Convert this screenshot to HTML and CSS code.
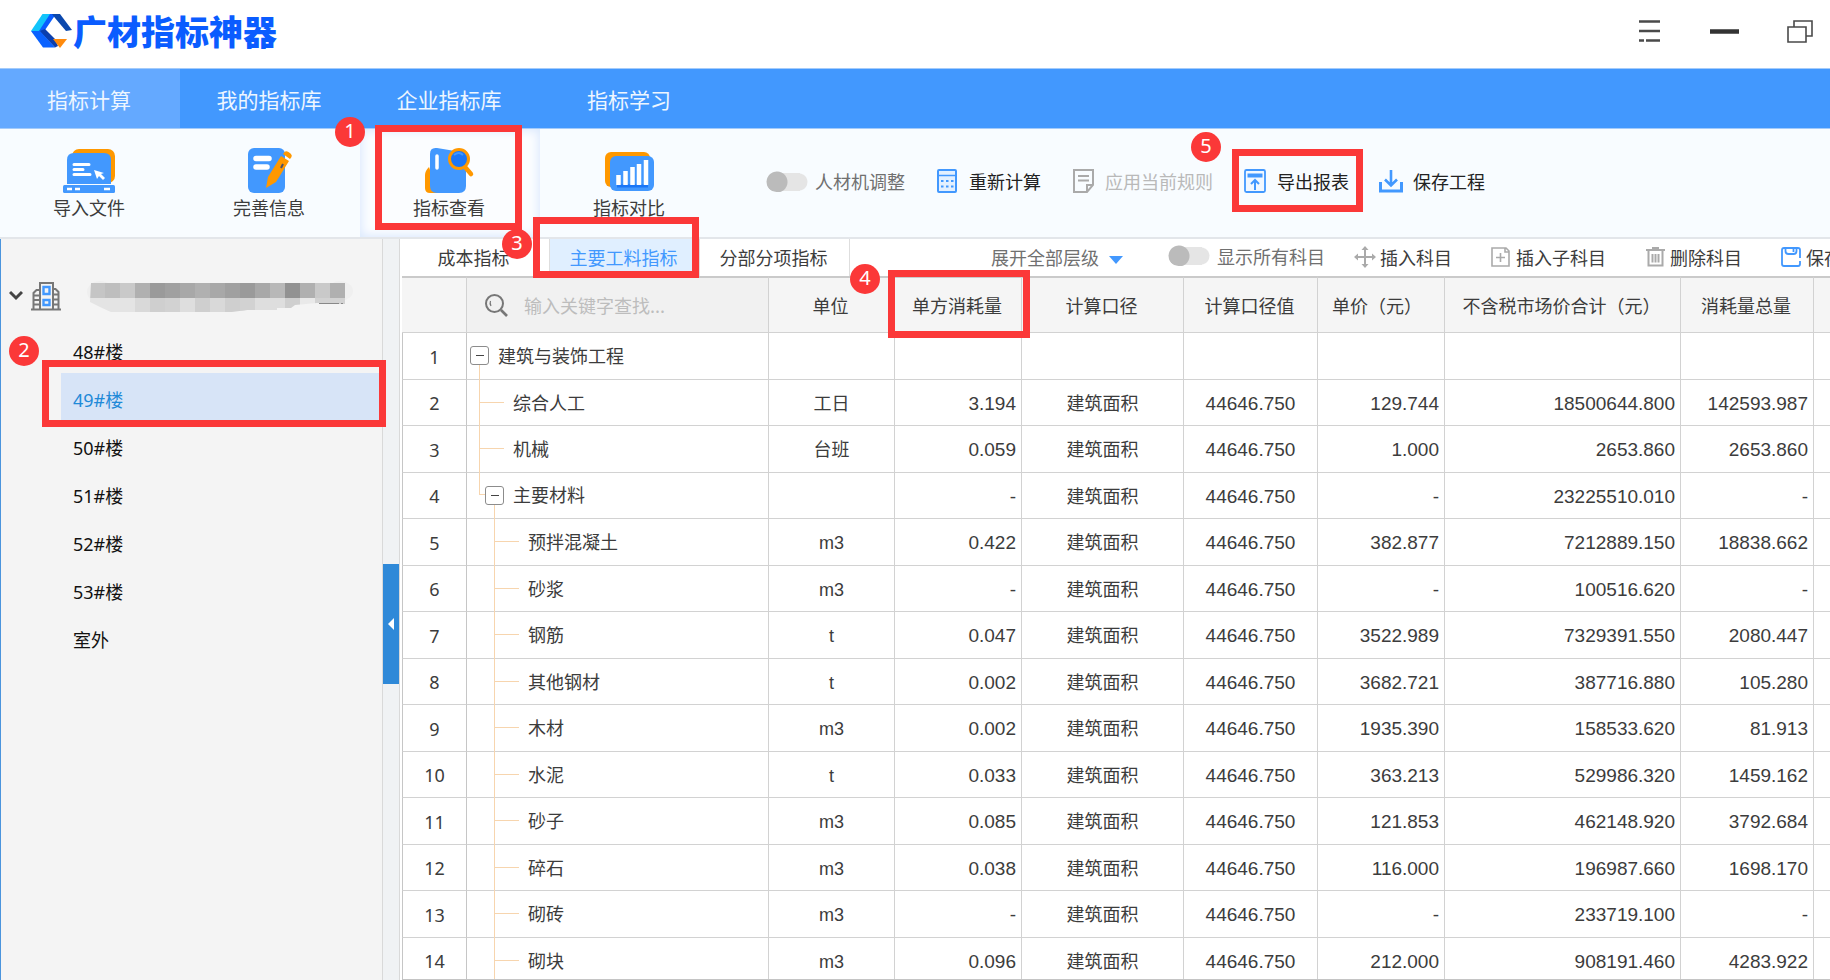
FILE: index.html
```html
<!DOCTYPE html>
<html lang="zh-CN">
<head>
<meta charset="utf-8">
<title>广材指标神器</title>
<link rel="stylesheet" href="styles.css">
</head>
<body>
<header class="titlebar">
  <h1 class="brand">
    <svg class="brand-mark" viewBox="0 0 42 36" aria-hidden="true">
      <path d="M0 18L11.500 1H22L11 18z" fill="#12c4fb"/>
      <path d="M19 1h6L14 17l-6 1z" fill="#0a5cff"/>
      <path d="M8 18l6-2 10 10 3 7-3 1.500z" fill="#0b3fae"/>
      <path d="M0 18h9l15 16.500H12z" fill="#0a62ff"/>
      <path d="M21 1h8l12 16-6 1L24 5z" fill="#0b48ad"/>
      <path d="M22 26h14l-7 9z" fill="#ff8a0c"/>
    </svg>
    <span class="brand-name">广材指标神器</span>
  </h1>
  <div class="window-controls">
    <button class="icon-button" aria-label="菜单"><svg width="30" height="30" viewBox="0 0 30 30"><path d="M4 5.500h21M4 15h21M4 24.500h5M11 24.500h14" stroke="#4a4a4a" stroke-width="2.400"/></svg></button>
    <button class="icon-button" aria-label="最小化"><svg width="30" height="30" viewBox="0 0 30 30"><path d="M0 15.500h29" stroke="#333" stroke-width="4.500"/></svg></button>
    <button class="icon-button" aria-label="还原"><svg width="30" height="30" viewBox="0 0 30 30" fill="none" stroke="#4a4a4a" stroke-width="1.600"><path d="M3 11h18v15H3zM9 11V5h18v15h-6"/></svg></button>
  </div>
</header>

<nav class="main-nav">
  <a class="nav-item active" href="#calc">指标计算</a>
  <a class="nav-item" href="#mine">我的指标库</a>
  <a class="nav-item" href="#company">企业指标库</a>
  <a class="nav-item" href="#learn">指标学习</a>
</nav>

<section class="ribbon">
  <button class="ribbon-item">
    <svg width="52" height="48" viewBox="0 0 52 48"><rect x="9" y="2" width="43" height="34" rx="7" fill="#ff9800"/><path d="M4 37V13q0-7 7-7h30q7 0 7 7v24z" fill="#4298fe"/><rect x="0" y="38" width="52" height="8" rx="1.500" fill="#4298fe"/><path d="M11 17.500h15M11 22.500h9M11 27.500h16" stroke="#fff" stroke-width="3" stroke-linecap="round"/><path d="M31 23l10 3-3 1 4 4-2 2-4-4-2 3z" fill="#fff"/><path d="M4 42h5M12 42h5M41 42h6" stroke="#fff" stroke-width="2.500"/></svg>
    <span>导入文件</span>
  </button>
  <button class="ribbon-item">
    <svg width="52" height="48" viewBox="0 0 52 48"><rect x="5" y="1" width="37" height="45" rx="6" fill="#4298fe"/><path d="M13 11.500h13M13 20h11" stroke="#fff" stroke-width="5.500" stroke-linecap="round"/><path d="M23 41l2-11 13-21 8 5-13 21zM40 7l1.500-2q1.500-1.500 4 0l2 1.500q2 1.500 1 3.500l-1.500 2z" fill="#ff9800"/><path d="M40 17l-2 4" stroke="#4a506a" stroke-width="2"/></svg>
    <span>完善信息</span>
  </button>
  <button class="ribbon-item active">
    <svg width="52" height="48" viewBox="0 0 52 48"><path d="M6 20q-4 4-4 8v13q0 5 5 5h8z" fill="#ff9800"/><path d="M7 7q0-7 7-6l24 4q5 1 5 6v28q0 7-7 7H14q-7 0-7-7z" fill="#4298fe"/><path d="M14 9v12" stroke="#fff" stroke-width="3.500" stroke-linecap="round"/><path d="M42 20l6 7" stroke="#ff9800" stroke-width="4.500" stroke-linecap="round"/><circle cx="36" cy="12" r="9.500" fill="#1b76f6" stroke="#ff9800" stroke-width="3"/><path d="M31 8q5-4 9 0" fill="none" stroke="#4298fe" stroke-width="2"/></svg>
    <span>指标查看</span>
  </button>
  <button class="ribbon-item">
    <svg width="52" height="48" viewBox="0 0 52 48"><rect x="2" y="5" width="45" height="35" rx="6" fill="#ff9800"/><rect x="7" y="9" width="44" height="35" rx="6" fill="#4298fe"/><path d="M14 39h31" stroke="#1b76f6" stroke-width="3"/><path d="M15.500 38V28M22.500 38V24M29.500 38V20M36 38V17M43 38V13" stroke="#fff" stroke-width="4.500"/></svg>
    <span>指标对比</span>
  </button>
  <div class="ribbon-tools">
    <label class="switch-label"><input class="switch" type="checkbox">人材机调整</label>
    <button class="tool strong"><svg width="24" height="26" viewBox="0 0 24 26"><rect x="3" y="2" width="18" height="22" rx="1" fill="#e3f0ff" stroke="#4298fe" stroke-width="2"/><path d="M4 7.500h16" stroke="#4298fe" stroke-width="1.500"/><path d="M6 13h2.500M11 13h2.500M16 13h2.500M6 18.500h2.500M11 18.500h2.500M16 18.500h2.500" stroke="#4298fe" stroke-width="2.200"/></svg>重新计算</button>
    <button class="tool" disabled><svg width="24" height="26" viewBox="0 0 24 26" fill="none" stroke="#aaa" stroke-width="2"><path d="M3 2h19v15l-6 7H3zM22 17h-6v7M7 8h11M7 12.500h11"/></svg>应用当前规则</button>
    <button class="tool strong"><svg width="24" height="26" viewBox="0 0 24 26" fill="none" stroke="#4298fe"><rect x="2" y="2" width="20" height="22" rx="1.500" fill="#f2f8ff" stroke-width="1.800"/><path d="M4.500 7.500h15" stroke-width="4"/><path d="M12 22v-9M8 16l4-4 4 4" stroke-width="2"/></svg>导出报表</button>
    <button class="tool strong"><svg width="24" height="26" viewBox="0 0 24 26" fill="none" stroke="#4298fe"><path d="M1.500 14v9h21v-9" stroke-width="3"/><path d="M12 2v15M6 11.500l6 6 6-6" stroke-width="2.600"/></svg>保存工程</button>
  </div>
</section>

<main class="workspace">
  <aside class="sidebar">
    <div class="project">
      <svg width="14" height="12" viewBox="0 0 14 12" aria-hidden="true"><path d="M1 2l6 6 6-6" fill="none" stroke="#444" stroke-width="3"/></svg>
      <svg width="30" height="30" viewBox="0 0 30 30" fill="none" stroke="#777" stroke-width="2" aria-hidden="true"><path d="M0 28.500h30M2.500 28V12l3-3H8M27.500 28V11l-3-3H22M9 28V2h13v26M3 14.500h5M3 19h5M3 23.500h5M23 13.500h4M23 18.500h4M23 23.500h4"/><path d="M12.500 6h6v7h-6zM12.500 19h6v5h-6z" stroke="#4298fe" stroke-width="2.400"/></svg>
      <svg class="redacted" width="268" height="32" viewBox="0 0 268 32" role="img" aria-label="项目名称已隐藏">
        <clipPath id="smudge"><path d="M5 3h254v21h-10v-1h-18l-22 2-4 3h-14v2h-30l-15 2-20 1H27L14 27 4 22z"/></clipPath>
        <ellipse cx="254" cy="11" rx="13" ry="10" fill="#efefef"/><ellipse cx="14" cy="12" rx="13" ry="11" fill="#efefef"/>
        <g clip-path="url(#smudge)">
          <path d="M4 18h45v14H4z" fill="#e4e4e4"/><path d="M49 18h15v14H49zM124 18h15v14h-15zM154 18h15v14h-15z" fill="#d9d9d9"/><path d="M64 18h15v14H64zM109 18h15v14h-15zM139 18h15v14h-15z" fill="#cfcfcf"/><path d="M79 18h15v14H79zM154 18h15v14h-15zM229 18h30v6h-30z" fill="#d2d2d2"/><path d="M94 18h15v14H94zM169 18h30v14h-30z" fill="#dedede"/><path d="M199 18h15v10h-15z" fill="#cfcfcf"/><path d="M214 18h15v8h-15z" fill="#e9e9e9"/>
          <path d="M4 3h15v15H4z" fill="#c5c5c5"/><path d="M19 3h15v15H19z" fill="#bebebe"/><path d="M34 3h15v15H34zM229 3h15v15h-15z" fill="#c9c9c9"/><path d="M49 3h15v15H49zM109 3h15v15h-15zM214 3h15v15h-15zM244 3h15v15h-15z" fill="#b0b0b0"/><path d="M64 3h15v15H64zM154 3h15v15h-15z" fill="#9a9a9a"/><path d="M79 3h15v15H79zM139 3h15v15h-15z" fill="#a0a0a0"/><path d="M94 3h15v15H94zM124 3h15v15h-15zM169 3h15v15h-15z" fill="#a8a8a8"/><path d="M184 3h15v15h-15z" fill="#b8b8b8"/><path d="M199 3h15v15h-15z" fill="#929292"/>
        </g>
        <path d="M233 23.500h20M255 23.500h2" stroke="#888"/>
      </svg>
    </div>
    <ul class="building-list">
      <li><a href="#b48">48#楼</a></li>
      <li><a class="selected" href="#b49">49#楼</a></li>
      <li><a href="#b50">50#楼</a></li>
      <li><a href="#b51">51#楼</a></li>
      <li><a href="#b52">52#楼</a></li>
      <li><a href="#b53">53#楼</a></li>
      <li><a href="#outdoor">室外</a></li>
    </ul>
  </aside>
  <div class="splitter"><button class="splitter-handle" aria-label="收起"><svg width="16" height="14" viewBox="0 0 16 14"><path d="M11 1v12L5 7z" fill="#fff"/></svg></button></div>
  <section class="content">
    <div class="tabbar">
      <a class="tab" href="#cost">成本指标</a>
      <a class="tab active" href="#material">主要工料指标</a>
      <a class="tab" href="#section">分部分项指标</a>
      <div class="sub-tools">
        <label class="level-picker"><select aria-label="层级"><option>展开全部层级</option></select><svg width="14" height="9" viewBox="0 0 14 9"><path d="M0 0h14L7 8z" fill="#4298fe"/></svg></label>
        <label class="switch-label"><input class="switch" type="checkbox">显示所有科目</label>
        <div class="row-actions">
          <button class="tool"><svg width="22" height="22" viewBox="0 0 22 22" fill="none" stroke="#aaa" stroke-width="2"><path d="M11 1v20M1 11h20"/><path d="M11 0l3.500 4h-7zM11 22l3.500-4h-7zM0 11l4-3.500v7zM22 11l-4-3.500v7z" fill="#aaa" stroke="none"/></svg>插入科目</button>
          <button class="tool"><svg width="22" height="22" viewBox="0 0 22 22" fill="none" stroke="#aaa" stroke-width="1.600"><path d="M2 2h14l3 3v15H2zM15 2v4h4M10.500 7v9M6 11.500h9"/></svg>插入子科目</button>
          <button class="tool"><svg width="22" height="22" viewBox="0 0 22 22" fill="none" stroke="#aaa" stroke-width="2"><path d="M2 4h19M8 2h7M4.500 5v14.500h14V5M8.500 8v8.500M11.500 8v8.500M14.500 8v8.500"/></svg>删除科目</button>
          <button class="tool"><svg width="22" height="22" viewBox="0 0 22 22" fill="none" stroke="#4298fe" stroke-width="1.800"><path d="M20 15v3q0 2-2 2H4q-2 0-2-2V4q0-2 2-2h14q2 0 2 2v8M5.500 2v3q0 3 3 3h5q3 0 3-3V2M13.500 3v3"/></svg>保存</button>
        </div>
      </div>
    </div>
    <div class="grid-wrap">
      <table class="grid">
        <colgroup><col class="c-num"><col class="c-name"><col class="c-unit"><col class="c-use"><col class="c-base"><col class="c-value"><col class="c-price"><col class="c-total"><col class="c-sum"><col></colgroup>
        <thead><tr><th></th><th class="search"><div class="search-box"><svg width="24" height="24" viewBox="0 0 24 24" fill="none" stroke="#777" stroke-width="2"><circle cx="10.500" cy="10.500" r="8.500"/><path d="M17 17l6 6" stroke-width="2.600"/><path d="M6.500 8q-1 2.500.5 5" stroke-width="1.200"/></svg><input type="text" aria-label="查找" placeholder="输入关键字查找..."></div></th><th>单位</th><th>单方消耗量</th><th>计算口径</th><th>计算口径值</th><th class="price-head">单价（元）</th><th>不含税市场价合计（元）</th><th>消耗量总量</th><th></th></tr></thead>
        <tbody>
          <tr><th>1</th><td class="name root"><button class="fold" aria-label="折叠"></button>建筑与装饰工程</td><td></td><td></td><td></td><td></td><td></td><td></td><td></td><td></td></tr>
          <tr><th>2</th><td class="name child">综合人工</td><td>工日</td><td>3.194</td><td>建筑面积</td><td>44646.750</td><td>129.744</td><td>18500644.800</td><td>142593.987</td><td></td></tr>
          <tr><th>3</th><td class="name child">机械</td><td>台班</td><td>0.059</td><td>建筑面积</td><td>44646.750</td><td>1.000</td><td>2653.860</td><td>2653.860</td><td></td></tr>
          <tr><th>4</th><td class="name branch"><button class="fold" aria-label="折叠"></button>主要材料</td><td></td><td>-</td><td>建筑面积</td><td>44646.750</td><td>-</td><td>23225510.010</td><td>-</td><td></td></tr>
          <tr><th>5</th><td class="name leaf">预拌混凝土</td><td>m3</td><td>0.422</td><td>建筑面积</td><td>44646.750</td><td>382.877</td><td>7212889.150</td><td>18838.662</td><td></td></tr>
          <tr><th>6</th><td class="name leaf">砂浆</td><td>m3</td><td>-</td><td>建筑面积</td><td>44646.750</td><td>-</td><td>100516.620</td><td>-</td><td></td></tr>
          <tr><th>7</th><td class="name leaf">钢筋</td><td>t</td><td>0.047</td><td>建筑面积</td><td>44646.750</td><td>3522.989</td><td>7329391.550</td><td>2080.447</td><td></td></tr>
          <tr><th>8</th><td class="name leaf">其他钢材</td><td>t</td><td>0.002</td><td>建筑面积</td><td>44646.750</td><td>3682.721</td><td>387716.880</td><td>105.280</td><td></td></tr>
          <tr><th>9</th><td class="name leaf">木材</td><td>m3</td><td>0.002</td><td>建筑面积</td><td>44646.750</td><td>1935.390</td><td>158533.620</td><td>81.913</td><td></td></tr>
          <tr><th>10</th><td class="name leaf">水泥</td><td>t</td><td>0.033</td><td>建筑面积</td><td>44646.750</td><td>363.213</td><td>529986.320</td><td>1459.162</td><td></td></tr>
          <tr><th>11</th><td class="name leaf">砂子</td><td>m3</td><td>0.085</td><td>建筑面积</td><td>44646.750</td><td>121.853</td><td>462148.920</td><td>3792.684</td><td></td></tr>
          <tr><th>12</th><td class="name leaf">碎石</td><td>m3</td><td>0.038</td><td>建筑面积</td><td>44646.750</td><td>116.000</td><td>196987.660</td><td>1698.170</td><td></td></tr>
          <tr><th>13</th><td class="name leaf">砌砖</td><td>m3</td><td>-</td><td>建筑面积</td><td>44646.750</td><td>-</td><td>233719.100</td><td>-</td><td></td></tr>
          <tr><th>14</th><td class="name leaf">砌块</td><td>m3</td><td>0.096</td><td>建筑面积</td><td>44646.750</td><td>212.000</td><td>908191.460</td><td>4283.922</td><td></td></tr>
        </tbody>
      </table>
    </div>
  </section>
</main>

<div class="callouts">
  <div class="frame frame-view"></div>
  <div class="frame frame-building"></div>
  <div class="frame frame-tab"></div>
  <div class="frame frame-column"></div>
  <div class="frame frame-export"></div>
  <span class="step step-1">1</span>
  <span class="step step-2">2</span>
  <span class="step step-3">3</span>
  <span class="step step-4">4</span>
  <span class="step step-5">5</span>
</div>
</body>
</html>
```

FILE: styles.css
```css
* { box-sizing: border-box; }

html, body { height: 100%; }

body {
  position: relative;
  margin: 0;
  display: flex;
  flex-direction: column;
  overflow: hidden;
  background: #fff;
  color: #3c3c3c;
  font: 18px/24px "Noto Sans CJK SC", sans-serif;
}

button, input, select {
  margin: 0;
  padding: 0;
  border: 0;
  background: none;
  color: inherit;
  font: inherit;
}

svg { display: block; flex: none; }
a { color: inherit; text-decoration: none; }

/* Title bar */
.titlebar {
  flex: none;
  display: flex;
  align-items: center;
  justify-content: space-between;
  height: 68px;
  padding: 0 15px 6px 31px;
}
.brand {
  display: flex;
  align-items: center;
  margin: 0;
  color: #0a5cff;
  font-size: 34px;
  line-height: 36px;
  font-weight: 900;
}
.brand-mark { width: 42px; height: 36px; }
.window-controls { display: flex; gap: 45px; }

/* Main navigation */
.main-nav {
  flex: none;
  display: flex;
  height: 61px;
  border-top: 1px solid #a3cbfb;
  border-bottom: 1px solid #a3cbfb;
  background: #4298fe;
  color: #eef6ff;
  font-size: 21px;
}
.nav-item { width: 180px; padding-right: 2px; line-height: 60px; text-align: center; }
.nav-item.active { background: #64a9ff; }

/* Ribbon */
.ribbon {
  flex: none;
  display: flex;
  height: 110px;
  border-bottom: 2px solid #e3e6ea;
  background: #f8fcff;
}
.ribbon-item {
  display: flex;
  flex-direction: column;
  align-items: center;
  width: 180px;
  padding: 18px 2px 0 0;
}
.ribbon-item.active {
  background: #fbfdff;
  box-shadow: inset 0 0 10px 2px #dce9fd;
}
.ribbon-tools {
  display: flex;
  align-items: center;
  gap: 30px;
  padding: 0 0 4px 46px;
}
.ribbon-tools .tool { gap: 10px; }
.tool {
  display: flex;
  align-items: center;
  gap: 4px;
  white-space: nowrap;
}
.tool.strong { color: #222; }
.tool:disabled { color: #b9b9b9; }
.switch-label {
  display: flex;
  align-items: center;
  gap: 7px;
  color: #707070;
  white-space: nowrap;
}
.switch {
  appearance: none;
  width: 42px;
  height: 21px;
  border-radius: 11px;
  background:
    radial-gradient(circle at 11px 11px, #bbb 10px, transparent 11px),
    linear-gradient(#e5e5e5, #e5e5e5) 6px 2px / 28px 18px no-repeat,
    radial-gradient(circle at 33px 11px, #e5e5e5 8px, transparent 9px);
}

/* Workspace */
.workspace { flex: 1; display: flex; min-height: 0; }
.sidebar {
  flex: none;
  width: 383px;
  border-left: 1px solid #4a94dd;
  border-right: 1px solid #d9d9d9;
  background: #f4f4f4;
}
.project {
  display: flex;
  align-items: center;
  gap: 8px;
  height: 86px;
  padding: 28px 0 0 8px;
}
.redacted { margin-left: 17px; }
.building-list {
  margin: 0;
  padding: 0 3px 0 60px;
  list-style: none;
  color: #111;
  font-family: "Noto Sans", "Noto Sans CJK SC", sans-serif;
}
.building-list a {
  display: block;
  height: 48px;
  padding: 7px 0 0 12px;
  line-height: 40px;
}
.building-list .selected { background: #d7e4f7; color: #1f8ad8; }
.splitter {
  flex: none;
  width: 17px;
  padding-top: 325px;
  border-right: 1px solid #d9d9d9;
  background: #f0f2f4;
}
.splitter-handle {
  display: flex;
  align-items: center;
  width: 16px;
  height: 120px;
  background: #2f89d8;
}
.content {
  flex: 1;
  display: flex;
  flex-direction: column;
  min-width: 0;
  overflow: hidden;
}

/* Tabs */
.tabbar { flex: none; display: flex; height: 37px; }
.tab {
  flex: none;
  width: 150px;
  padding-right: 2px;
  border-right: 1px solid #dedede;
  line-height: 36px;
  text-align: center;
}
.tab.active { background: #e0efff; color: #4298fe; }
.sub-tools {
  display: flex;
  align-items: center;
  padding: 0 0 2px 141px;
}
.level-picker { position: relative; margin-right: 45px; color: #707070; }
.level-picker select { display: block; width: 132px; appearance: none; }
.level-picker svg { position: absolute; right: 0; top: 11px; pointer-events: none; }
.sub-tools .switch-label { padding-bottom: 2px; }
.row-actions { display: flex; gap: 38px; margin-left: 29px; }

/* Grid */
.grid-wrap {
  flex: 1;
  min-height: 0;
  overflow: hidden;
  margin-left: 2px;
  border-bottom: 1px solid #c4c4c4;
}
.grid {
  width: 100%;
  table-layout: fixed;
  border-collapse: separate;
  border-spacing: 0;
}
.c-num { width: 65px; }
.c-name { width: 302px; }
.c-unit { width: 126px; }
.c-use { width: 127px; }
.c-base { width: 162px; }
.c-value { width: 134px; }
.c-price { width: 127px; }
.c-total { width: 236px; }
.c-sum { width: 133px; }

.grid th, .grid td {
  padding: 0;
  border-right: 1px solid #d2d2d2;
  border-bottom: 1px solid #d2d2d2;
  font-weight: 400;
  text-align: center;
  white-space: nowrap;
}
.grid tr > :last-child { border-right: 0; }
.grid thead th {
  height: 57px;
  padding-right: 2px;
  border-top: 2px solid #cacaca;
  background: #f5f5f5;
}
.grid thead .search { background: #f1f1f1; }
.grid thead .price-head { padding-right: 8px; }
.search-box { display: flex; align-items: center; gap: 16px; padding-left: 17px; }
.search-box input { flex: 1; min-width: 0; }
.search-box input::placeholder { color: #bdbdbd; opacity: 1; }

.grid tbody tr { height: 46px; }
.grid tbody tr:nth-child(odd) { height: 47px; }
.grid tbody th {
  padding-top: 1px;
  border-left: 1px solid #c6c6c6;
  border-right-color: #c6c6c6;
  font-family: "Noto Sans", sans-serif;
}
.grid tbody td {
  padding-top: 2px;
  font-family: "Liberation Sans", "Noto Sans CJK SC", sans-serif;
}
.grid tbody td:nth-child(4),
.grid tbody td:nth-child(6),
.grid tbody td:nth-child(7),
.grid tbody td:nth-child(8),
.grid tbody td:nth-child(9) { font-size: 19px; }
.grid tbody td:nth-child(4),
.grid tbody td:nth-child(7),
.grid tbody td:nth-child(8),
.grid tbody td:nth-child(9) { padding-right: 5px; text-align: right; }

.grid .name { position: relative; text-align: left; }
.grid .root { padding-left: 3px; }
.grid .branch { padding-left: 18px; }
.grid .child { padding-left: 46px; }
.grid .leaf { padding-left: 61px; }
.fold {
  position: relative;
  z-index: 1;
  width: 19px;
  height: 19px;
  margin: 0 9px 4px 0;
  border: 1px solid #8c8c8c;
  border-radius: 3px;
  background: linear-gradient(#444, #444) center / 8px 1px no-repeat #fff;
  vertical-align: middle;
}

/* Tree guides */
.name::before, .name::after { content: ""; position: absolute; }
.name::before { top: 0; bottom: -1px; border-left: 1px solid #f7d5ae; }
.name::after { top: 22px; border-top: 1px solid #f7d5ae; }
.root::before { left: 12px; top: 32px; }
.child::before { left: 12px; }
.child::after { left: 12px; width: 25px; }
.branch::before {
  left: 12px;
  bottom: 23px;
  width: 8px;
  border-bottom: 1px solid #f7d5ae;
}
.branch::after {
  left: 27px;
  top: 32px;
  bottom: -1px;
  border-top: 0;
  border-left: 1px solid #f7d5ae;
}
.leaf::before { left: 27px; }
.leaf::after { left: 27px; width: 25px; }

/* Step callouts drawn over the window */
.callouts { position: absolute; inset: 0; pointer-events: none; }
.frame { position: absolute; border: 7px solid #fb3838; }
.frame-view { left: 375px; top: 125px; width: 147px; height: 105px; }
.frame-building { left: 42px; top: 360px; width: 344px; height: 67px; }
.frame-tab { left: 533px; top: 217px; width: 166px; height: 61px; }
.frame-column { left: 888px; top: 270px; width: 142px; height: 68px; }
.frame-export { left: 1232px; top: 149px; width: 131px; height: 63px; }
.step {
  position: absolute;
  width: 30px;
  height: 30px;
  border-radius: 50%;
  background: #fb3838;
  color: #fff;
  font: 20px/28px "Noto Sans", sans-serif;
  text-align: center;
}
.step-1 { left: 335px; top: 117px; }
.step-2 { left: 9px; top: 336px; }
.step-3 { left: 502px; top: 229px; }
.step-4 { left: 850px; top: 264px; }
.step-5 { left: 1191px; top: 132px; }
```
